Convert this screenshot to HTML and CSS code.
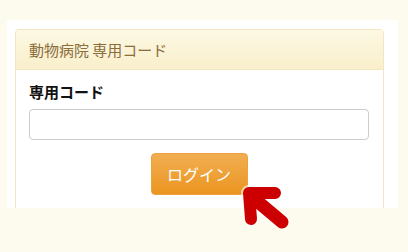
FILE: index.html
```html
<!DOCTYPE html>
<html lang="ja">
<head>
    <meta charset="UTF-8">
    <meta name="viewport" content="width=device-width, initial-scale=1.0">
    <title>専用コード ログイン</title>
    <link rel="stylesheet" href="styles.css">
</head>
<body>

    <div class="page">
        <div class="panel">
            <!-- Heading -->
            <div class="panel-heading">動物病院 専用コード</div>

            <!-- Form -->
            <div class="panel-body">
                <label class="field-label" for="code">専用コード</label>
                <input class="field-input" id="code" type="text">
                <div class="actions">
                    <button class="btn-login" type="button">ログイン</button>
                </div>
            </div>
        </div>
    </div>

    <!-- Pointer arrow -->
    <svg class="pointer" width="408" height="252" viewBox="0 0 408 252">
        <g fill="none" stroke="#ffffff" stroke-opacity="0.6" stroke-linecap="round" stroke-linejoin="round">
            <path d="M275 193 L249 193 L251 219" stroke-width="16"/>
            <path d="M251 196 L282 222" stroke-width="17"/>
        </g>
        <g fill="none" stroke="#cc0000" stroke-linecap="round" stroke-linejoin="round">
            <path d="M275 193 L249 193 L251 219" stroke-width="12"/>
            <path d="M251 196 L282 222" stroke-width="13"/>
        </g>
    </svg>

</body>
</html>
```

FILE: styles.css
```css
body {
    margin: 0;
    padding-top: 20px;
    background-color: #fcfbee;
    font-family: "Noto Sans CJK JP", "Liberation Sans", sans-serif;
}

.page {
    background-color: #fff;
    margin: 0 10px 0 7px;
    padding: 9px 14px 0 8px;
    height: 179px;
    overflow: hidden;
}

/* Panel */
.panel {
    border: 1px solid #f5e4c4;
    border-radius: 4px;
    height: 260px;
}

.panel-heading {
    height: 40px;
    box-sizing: border-box;
    padding: 0 13px;
    display: flex;
    align-items: center;
    font-size: 15px;
    color: #8a6d3b;
    background: linear-gradient(to bottom, #fcf8e3 0%, #f9efcb 100%);
    border-bottom: 1px solid #f5e4c4;
    border-radius: 3px 3px 0 0;
}

.panel-body {
    padding: 12px 14px 12px 13px;
}

.field-label {
    display: block;
    font-size: 15px;
    font-weight: 700;
    line-height: 20px;
    color: #111;
    margin-bottom: 7px;
}

.field-input {
    display: block;
    width: 100%;
    height: 31px;
    box-sizing: border-box;
    border: 1px solid #ccc;
    border-radius: 4px;
    background-color: #fff;
    margin: 0;
}

.actions {
    display: flex;
    justify-content: center;
    margin-top: 13px;
}

.btn-login {
    width: 97px;
    height: 42px;
    border: 1px solid #eca23a;
    border-radius: 4px;
    background: linear-gradient(to bottom, #f1ae52 0%, #eb9520 100%);
    color: #fff;
    font-family: inherit;
    font-size: 16px;
    padding: 0;
}

.pointer {
    position: absolute;
    top: 0;
    left: 0;
    pointer-events: none;
}
```
